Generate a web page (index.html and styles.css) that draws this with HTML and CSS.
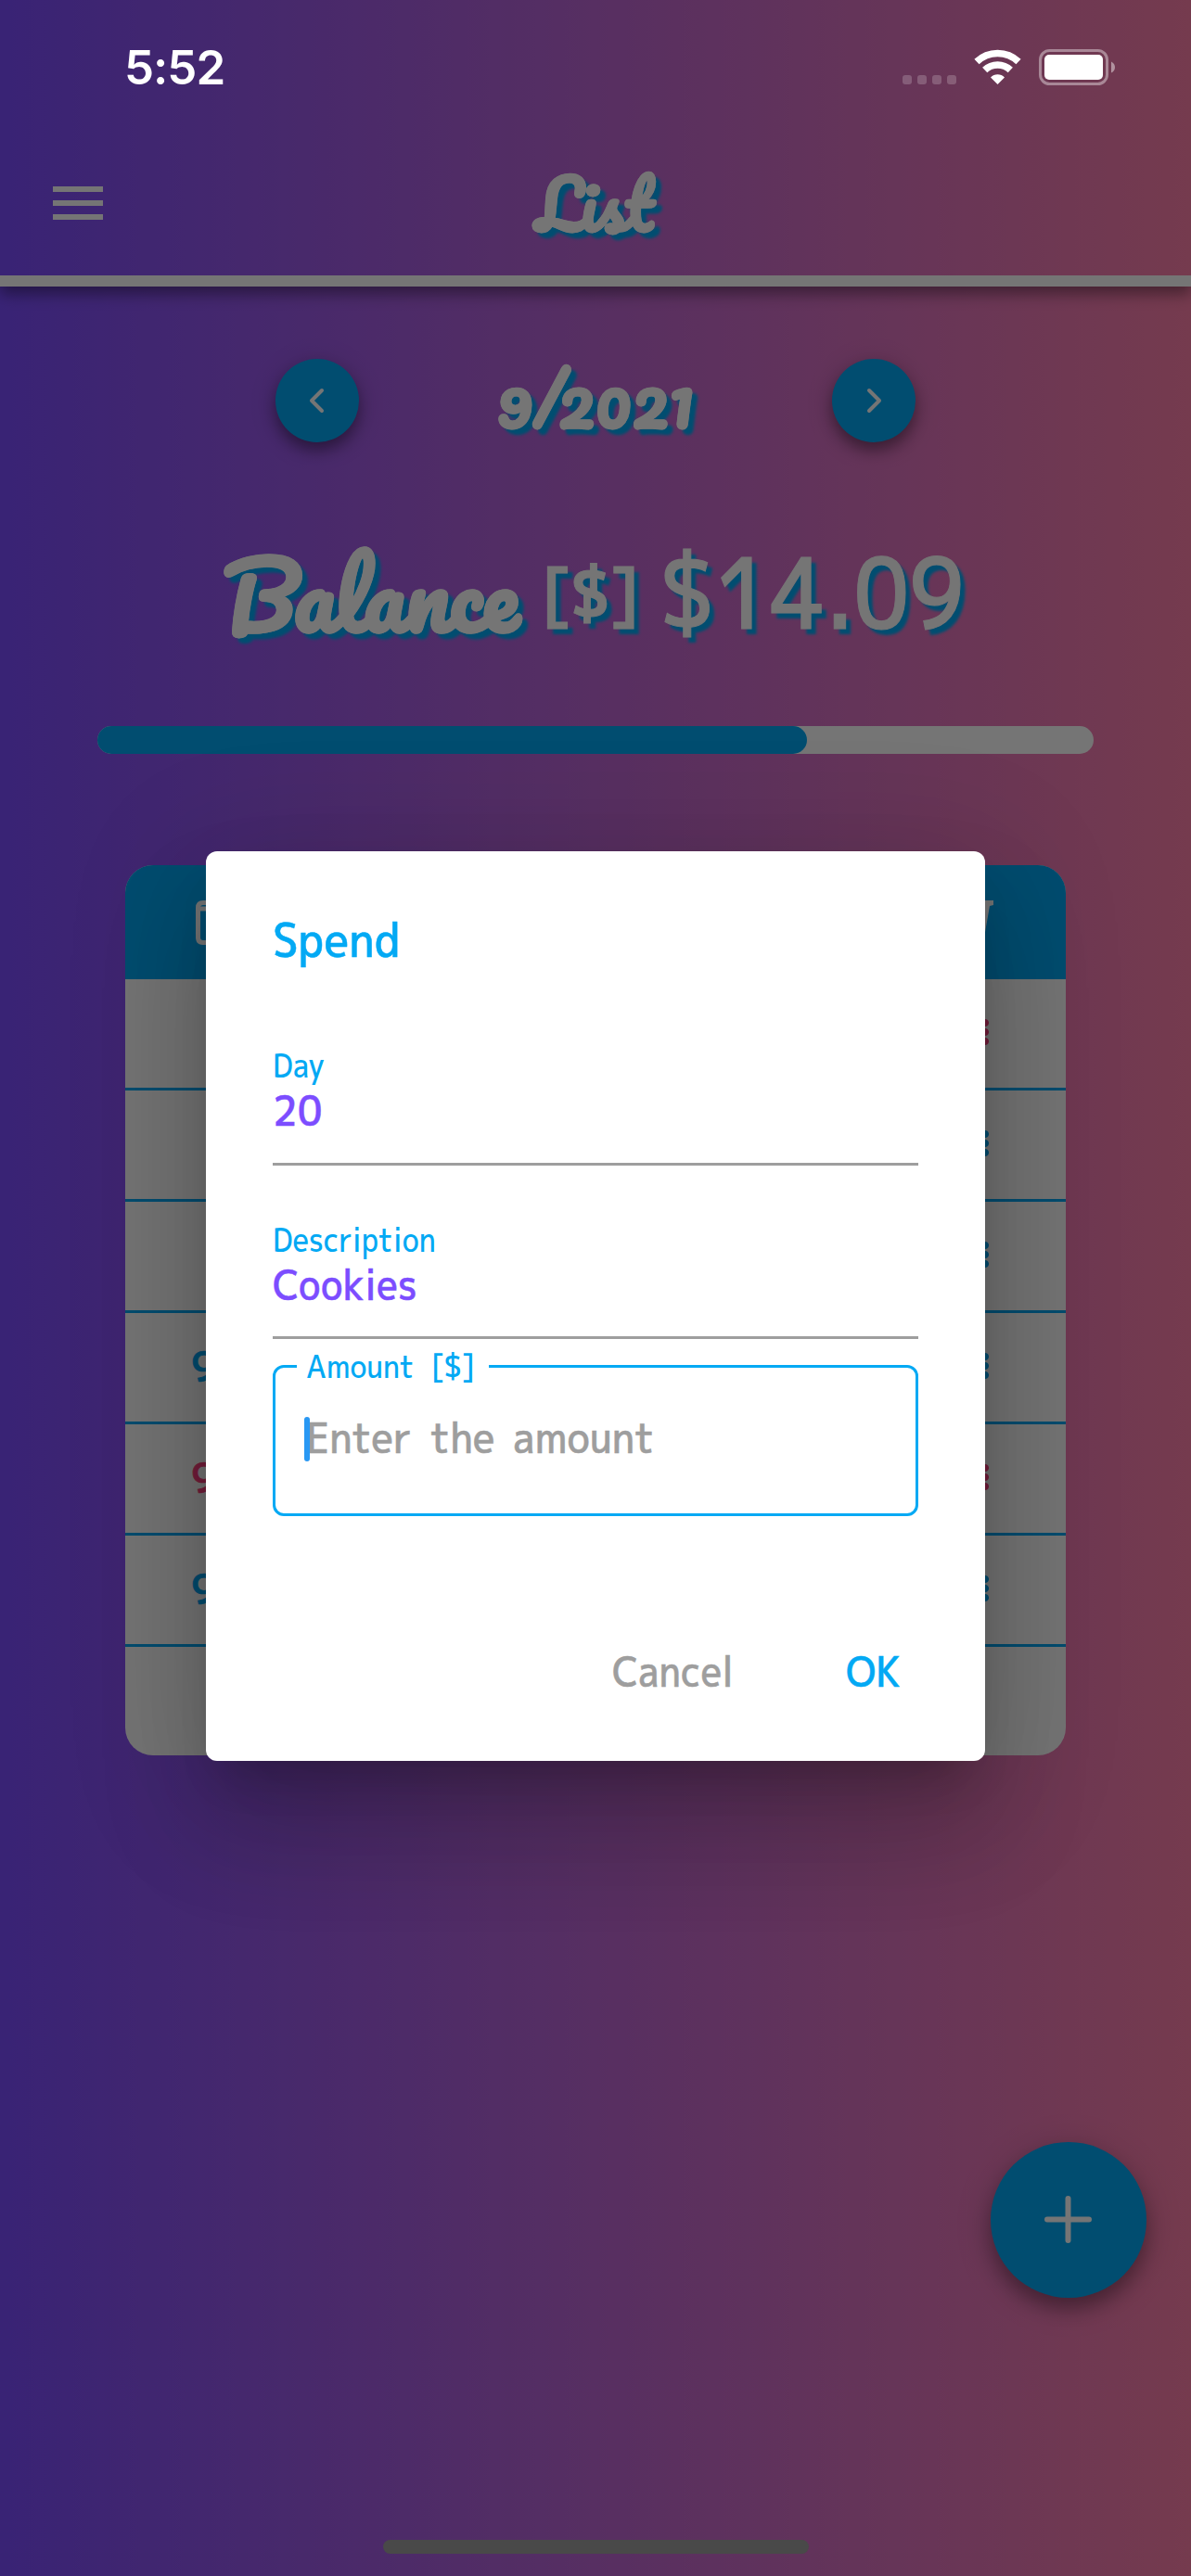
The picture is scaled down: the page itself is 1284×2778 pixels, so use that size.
FILE: index.html
```html
<!DOCTYPE html>
<html lang="en">
<head>
<meta charset="utf-8">
<title>List</title>
<link rel="stylesheet" href="styles.css">
</head>
<body>
<div class="app">
  <header class="app-bar">
    <svg class="menu" viewBox="0 0 54 36"><path d="M0 0h54v6H0zM0 15h54v6H0zM0 30h54v6H0z" fill="#fff"/></svg>
    <h1 class="title script"><span class="fit-list">List</span></h1>
  </header>
  <main class="content">
    <div class="month">
      <button class="round"><svg viewBox="0 0 24 24"><path d="M14.5 6.5 9 12l5.5 5.500"/></svg></button>
      <div class="month-name script"><span class="fit-month">9/2021</span></div>
      <button class="round"><svg viewBox="0 0 24 24"><path d="M9.500 6.500 15 12l-5.500 5.500"/></svg></button>
    </div>
    <div class="balance">
      <span class="bal-word script"><span class="fit-bal">Balance</span></span>
      <span class="bal-unit"><span class="fit-unit">[$]</span></span>
      <span class="bal-value"><span class="fit-value">$14.09</span></span>
    </div>
    <div class="track"><div class="fill"></div></div>
    <section class="table">
      <div class="thead">
        <svg class="cal" viewBox="0 0 48 48"><path d="M2.500 12V8q0-5.500 5.500-5.500h32q5.500 0 5.500 5.500v32q0 5.500-5.500 5.500H8q-5.500 0-5.500-5.500z"/><path d="M2.500 9h43"/></svg>
        <svg class="cart" viewBox="0 0 48 48"><path d="M0 0h48v5l-4 1-6 34-6 6z"/></svg>
      </div>
      <div class="row pink"><span></span><i class="dots"></i></div>
      <div class="row"><span></span><i class="dots"></i></div>
      <div class="row"><span></span><i class="dots"></i></div>
      <div class="row"><span>9</span><i class="dots"></i></div>
      <div class="row pink"><span>9</span><i class="dots"></i></div>
      <div class="row"><span>9</span><i class="dots"></i></div>
      <div class="row last"></div>
    </section>
  </main>
  <button class="fab"><svg viewBox="0 0 51 51"><path d="M25.500 3v45M3 25.500h45"/></svg></button>
</div>
<div class="scrim">
  <div class="status">
    <span class="time">5:52</span>
    <svg class="status-icons" viewBox="0 0 230 40">
      <g fill="#fff" fill-opacity=".2"><rect x="0" y="28" width="10" height="10" rx="3"/><rect x="16" y="28" width="10" height="10" rx="3"/><rect x="32" y="28" width="10" height="10" rx="3"/><rect x="48" y="28" width="10" height="10" rx="3"/></g>
      <g fill="none" stroke="#fff" stroke-width="7.500"><path d="M80 13.500a32.500 32.500 0 0 1 45 0"/><path d="M88.700 22.500a20 20 0 0 1 27.600 0"/></g>
      <path d="M102.500 38l-7.500-7.500a10.500 10.500 0 0 1 15 0z" fill="#fff"/>
      <rect x="148.500" y="1.500" width="72" height="36" rx="10" fill="none" stroke="#fff" stroke-opacity=".4" stroke-width="3"/>
      <rect x="153" y="6" width="63" height="27" rx="5" fill="#fff"/>
      <path d="M225 13.500q4 2 4 6t-4 6z" fill="#fff" fill-opacity=".45"/>
    </svg>
  </div>
  <form class="dialog">
    <h2 class="heading"><span class="fit-spend">Spend</span></h2>
    <div class="field field-day"><label><span class="fit-day">Day</span></label><div class="value"><span class="fit-20">20</span></div></div>
    <div class="field"><label><span class="fit-desc">Description</span></label><div class="value"><span class="fit-cook">Cookies</span></div></div>
    <fieldset class="amount">
      <legend><span class="fit-amount">Amount [$]</span></legend>
      <div class="placeholder"><i class="caret"></i><span class="fit-enter">Enter the amount</span></div>
    </fieldset>
    <div class="actions"><span class="cancel"><span class="fit-cancel">Cancel</span></span><span class="ok"><span class="fit-ok">OK</span></span></div>
  </form>
  <div class="home"></div>
</div>
</body>
</html>
```
FILE: styles.css
```css
* { box-sizing: border-box; }
body { margin: 0; width: 1284px; height: 2778px; overflow: hidden; font-family: "M PLUS 1p", "M PLUS Rounded 1c", "M PLUS 1", "Noto Sans", "Open Sans", sans-serif; }
span { white-space: nowrap; }
button { border: 0; padding: 0; background: #03a9f4; border-radius: 50%; display: grid; place-items: center; }
.app { height: 2778px; position: relative; background: linear-gradient(90deg, #7c4dff, #ff80ab); }
.app-bar { height: 309px; border-bottom: 12px solid #fff; box-shadow: 0 8px 15px rgba(0,0,0,.4); display: grid; grid-template-columns: 57px 54px 1fr 113px; padding-top: 150px; }
.menu { grid-column: 2; width: 54px; height: 36px; margin-top: 51px; }
.title { grid-column: 3; margin: 0; display: flex; justify-content: center; padding-top: 15px; line-height: 110px; font-size: 72px; }
.script { font-family: Pacifico, Lato, sans-serif; font-weight: 700; }
.title, .month-name, .balance { color: #fff; text-shadow: 6px 6px 3px #03a9f4; }
.title, .month-name { -webkit-text-stroke: .5px #fff; }
.title span { display: block; }
.content { padding: 78px 105px 0; }
.month { display: flex; justify-content: space-between; align-items: center; width: 690px; margin: 0 auto; height: 90px; }
.round { width: 90px; height: 90px; box-shadow: 0 9px 15px rgba(0,0,0,.35), 0 4px 30px rgba(0,0,0,.15); }
.round svg { width: 48px; height: 48px; fill: none; stroke: #fff; stroke-width: 2; stroke-linecap: round; stroke-linejoin: round; }
.month-name { font-size: 72px; line-height: 90px; }
.balance { display: grid; grid-template-columns: 342px 129px 320px; height: 120px; margin: 102px 0 0 136px; line-height: 120px; }
.bal-word { font-size: 96px; padding-top: 2px; }
.fit-bal { -webkit-text-stroke: .5px #fff; }
.bal-unit { font-size: 72px; font-weight: 700; }
.fit-unit, .fit-value { display: inline-block; transform-origin: 0 50%; }
.fit-unit { transform: scaleX(.94); -webkit-text-stroke: 1px #fff; }
.bal-value { font-size: 105px; font-weight: 500; -webkit-text-stroke: 1px #fff; }
.fit-value { transform: scaleX(.907); }
.track { height: 30px; margin-top: 84px; border-radius: 15px; background: #fff; }
.fill { width: 765px; height: 30px; border-radius: 15px; background: #03a9f4; }
.table { margin: 120px 30px 0; height: 960px; border-radius: 30px; background: #fff; overflow: hidden; }
.thead { height: 123px; background: #03a9f4; display: flex; justify-content: space-between; padding: 38px 78px 0 76px; }
.thead svg { width: 48px; height: 48px; }
.cal { fill: none; stroke: #fff; stroke-width: 5; }
.cart { fill: #fff; }
.row { height: 120px; border-bottom: 3px solid #03a9f4; color: #03a9f4; display: flex; justify-content: space-between; align-items: center; padding: 0 83px 4px 71px; font-size: 45px; font-weight: 500; -webkit-text-stroke: .7px currentColor; }
.pink { color: #ff4081; }
.row.last { border: 0; }
.dots { width: 8px; height: 29px; background: radial-gradient(circle, currentColor 3.500px, transparent 4.500px) 0 0 / 8px 10px; }
.fab { position: absolute; left: 1068px; top: 2310px; width: 168px; height: 168px; box-shadow: 0 12px 20px rgba(0,0,0,.3), 0 6px 40px rgba(0,0,0,.15); }
.fab svg { width: 51px; height: 51px; fill: none; stroke: #fff; stroke-width: 6; stroke-linecap: round; margin: -1px 2px 0 0; }
.scrim { position: absolute; inset: 0; background: rgba(0,0,0,.54); display: flex; flex-direction: column; align-items: center; }
.status { width: 1284px; height: 918px; display: flex; justify-content: space-between; align-items: flex-start; padding: 53px 81px 0 134px; color: #fff; }
.time { font: 600 51px/40px Inter, sans-serif; letter-spacing: -1px; }
.status-icons { width: 230px; height: 40px; }
.dialog { width: 840px; height: 981px; border-radius: 12px; background: #fff; padding: 69px 72px 0; box-shadow: 0 33px 45px -21px rgba(0,0,0,.2), 0 72px 114px 9px rgba(0,0,0,.14), 0 27px 138px 24px rgba(0,0,0,.12); font-weight: 500; -webkit-text-stroke: .5px currentColor; }
.dialog span { display: inline-block; transform-origin: 0 50%; }
.heading { margin: 0; font-size: 51px; line-height: 52px; font-weight: 500; color: #03a9f4; }
.field { height: 187px; padding-top: 60px; border-bottom: 3px solid #9e9e9e; }
.field-day { height: 218px; padding-top: 90px; }
label { display: block; height: 39px; font-size: 35px; line-height: 39px; color: #03a9f4; -webkit-text-stroke: 0; }
.value { font-size: 45px; line-height: 58px; color: #7c4dff; }
.amount { height: 184px; margin: 7px 0 0; border: 3px solid #03a9f4; border-radius: 12px; padding: 25px 31px; min-width: 0; }
legend { margin-left: -8px; height: 44px; width: 207px; padding-left: 10px; font-size: 34px; line-height: 44px; color: #03a9f4; -webkit-text-stroke: 0; }
.placeholder { display: flex; align-items: center; font-size: 45px; line-height: 60px; color: #9e9e9e; }
.caret { width: 6px; height: 48px; border-radius: 3px; background: #2998f3; margin: 4px -4px 0 0; z-index: 1; }
.fit-spend { transform: scaleX(.933); }
.fit-day { transform: scaleX(.9); }
.fit-20 { transform: scaleX(.94); }
.fit-desc { transform: scaleX(.892); }
.fit-cook { transform: scaleX(.907); }
.fit-amount { transform: scaleX(.915); word-spacing: 9.500px; }
.fit-enter { transform: scaleX(.94); word-spacing: 7.500px; }
.fit-cancel { transform: scaleX(.9); }
.fit-ok { transform: scaleX(.9); }
.actions { display: flex; justify-content: flex-end; padding: 137px 21px 0 0; font-size: 45px; line-height: 60px; }
.cancel { color: #9e9e9e; width: 252px; }
.ok { color: #03a9f4; width: 57px; }
.home { width: 459px; height: 15px; margin-top: 840px; border-radius: 8px; background: #494949; }
```
